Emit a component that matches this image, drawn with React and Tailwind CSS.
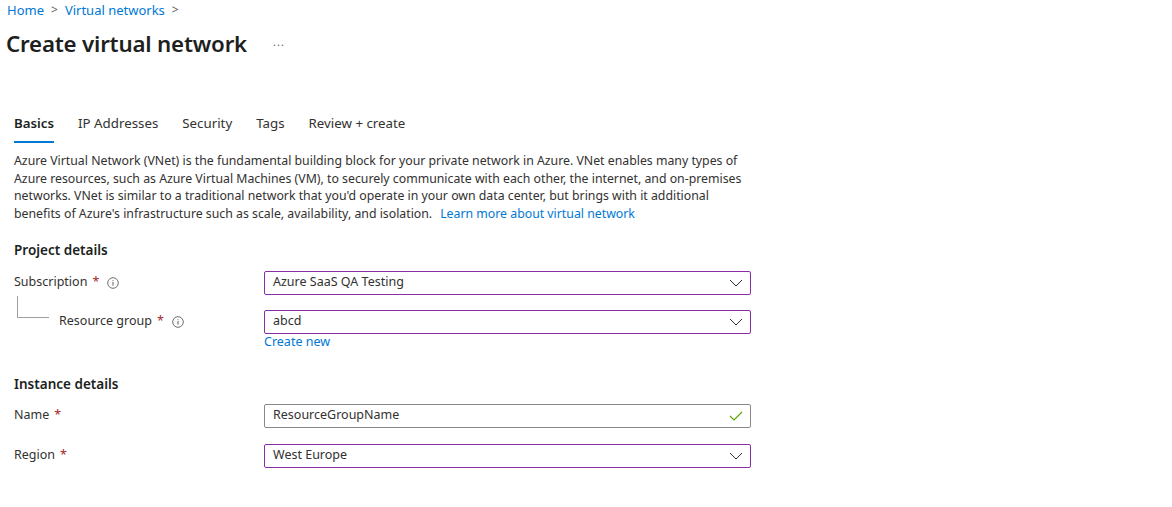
import React from "react";

const font = { fontFamily: '"Noto Sans", "Open Sans", Arial, sans-serif' };

function Chevron() {
  return (
    <svg width="14" height="8" viewBox="0 0 14 8" className="shrink-0">
      <path d="M1 1 L7 7 L13 1" fill="none" stroke="#323130" strokeWidth="1" />
    </svg>
  );
}

function Check() {
  return (
    <svg width="14" height="10" viewBox="0 0 14 10" className="shrink-0">
      <path d="M1 5 L5 9 L13 1" fill="none" stroke="#57a300" strokeWidth="1.1" />
    </svg>
  );
}

function Info() {
  return (
    <svg width="12" height="12" viewBox="0 0 12 12" className="shrink-0">
      <circle cx="6" cy="6" r="5.3" fill="none" stroke="#605e5c" strokeWidth="0.9" />
      <rect x="5.5" y="5" width="1" height="3.6" fill="#605e5c" />
      <rect x="5.5" y="3.2" width="1" height="1" fill="#605e5c" />
    </svg>
  );
}

function Req() {
  return <span className="text-[#a4262c] ml-[5px]">*</span>;
}

function Box({ value, kind }) {
  const border = kind === "text" ? "border-[#8a8886]" : "border-[#8a2da5]";
  return (
    <div
      className={`w-[487px] h-[24px] border ${border} rounded-[2px] flex items-center justify-between pl-[8px] pr-[7px] text-[12.5px] text-[#323130]`}
    >
      <span>{value}</span>
      {kind === "text" ? <Check /> : <Chevron />}
    </div>
  );
}

export default function App() {
  return (
    <div className="w-[1172px] h-[507px] bg-white text-[#323130] overflow-hidden" style={font}>
      {/* breadcrumb */}
      <div className="flex items-center h-[20px] pl-[7px] text-[13px] leading-[20px]">
        <span className="text-[#0078d4]">Home</span>
        <span className="text-[#605e5c] mx-[7px] text-[12px]">&gt;</span>
        <span className="text-[#0078d4]">Virtual networks</span>
        <span className="text-[#605e5c] mx-[7px] text-[12px]">&gt;</span>
      </div>
      {/* title */}
      <div className="flex items-center h-[48px] pl-[6px]">
        <h1 className="text-[22.3px] font-semibold text-[#201f1e] leading-[32px] tracking-[-0.2px]">
          Create virtual network
        </h1>
        <span className="ml-[26px] text-[11px] text-[#605e5c] tracking-[1px] -mt-[4px]">...</span>
      </div>
      {/* tabs */}
      <div className="flex items-end pl-[14px] mt-[41px] h-[34px] text-[13.3px] gap-[24px]">
        <div className="flex flex-col">
          <span className="font-semibold text-[#201f1e] leading-[20px]">Basics</span>
          <div className="h-[2px] bg-[#0078d4] mt-[8px]" />
        </div>
        <span className="leading-[20px] mb-[10px]">IP Addresses</span>
        <span className="leading-[20px] mb-[10px]">Security</span>
        <span className="leading-[20px] mb-[10px]">Tags</span>
        <span className="leading-[20px] mb-[10px]">Review + create</span>
      </div>
      {/* description */}
      <div className="pl-[14px] mt-[9px] text-[12.3px] leading-[17.7px] whitespace-nowrap">
        <div>Azure Virtual Network (VNet) is the fundamental building block for your private network in Azure. VNet enables many types of</div>
        <div>Azure resources, such as Azure Virtual Machines (VM), to securely communicate with each other, the internet, and on-premises</div>
        <div>networks. VNet is similar to a traditional network that you'd operate in your own data center, but brings with it additional</div>
        <div>
          benefits of Azure's infrastructure such as scale, availability, and isolation.
          <span className="ml-[8px] text-[#0078d4]">Learn more about virtual network</span>
        </div>
      </div>
      {/* project details */}
      <div className="pl-[14px] mt-[17px] text-[13.5px] font-semibold text-[#201f1e] leading-[20px]">
        Project details
      </div>
      <div className="pl-[14px] mt-[11px] flex items-center text-[12.5px]">
        <div className="w-[250px] flex items-center">
          <span>Subscription</span>
          <Req />
          <span className="ml-[8px] flex"><Info /></span>
        </div>
        <Box value="Azure SaaS QA Testing" kind="select" />
      </div>
      <div className="pl-[14px] mt-[15px] flex items-center text-[12.5px]">
        <div className="w-[250px] flex items-center relative">
          <div className="absolute left-[3px] top-[-16px] w-[32px] h-[22px] border-l border-b border-[#a19f9d]" />
          <span className="ml-[45px]">Resource group</span>
          <Req />
          <span className="ml-[8px] flex"><Info /></span>
        </div>
        <Box value="abcd" kind="select" />
      </div>
      <div className="pl-[264px] -mt-[1px] text-[12.5px] text-[#0078d4] leading-[18px]">Create new</div>
      {/* instance details */}
      <div className="pl-[14px] mt-[23px] text-[13.5px] font-semibold text-[#201f1e] leading-[20px]">
        Instance details
      </div>
      <div className="pl-[14px] mt-[10px] flex items-center text-[12.5px]">
        <div className="w-[250px] flex items-center">
          <span>Name</span>
          <Req />
        </div>
        <Box value="ResourceGroupName" kind="text" />
      </div>
      <div className="pl-[14px] mt-[16px] flex items-center text-[12.5px]">
        <div className="w-[250px] flex items-center">
          <span>Region</span>
          <Req />
        </div>
        <Box value="West Europe" kind="select" />
      </div>
    </div>
  );
}
